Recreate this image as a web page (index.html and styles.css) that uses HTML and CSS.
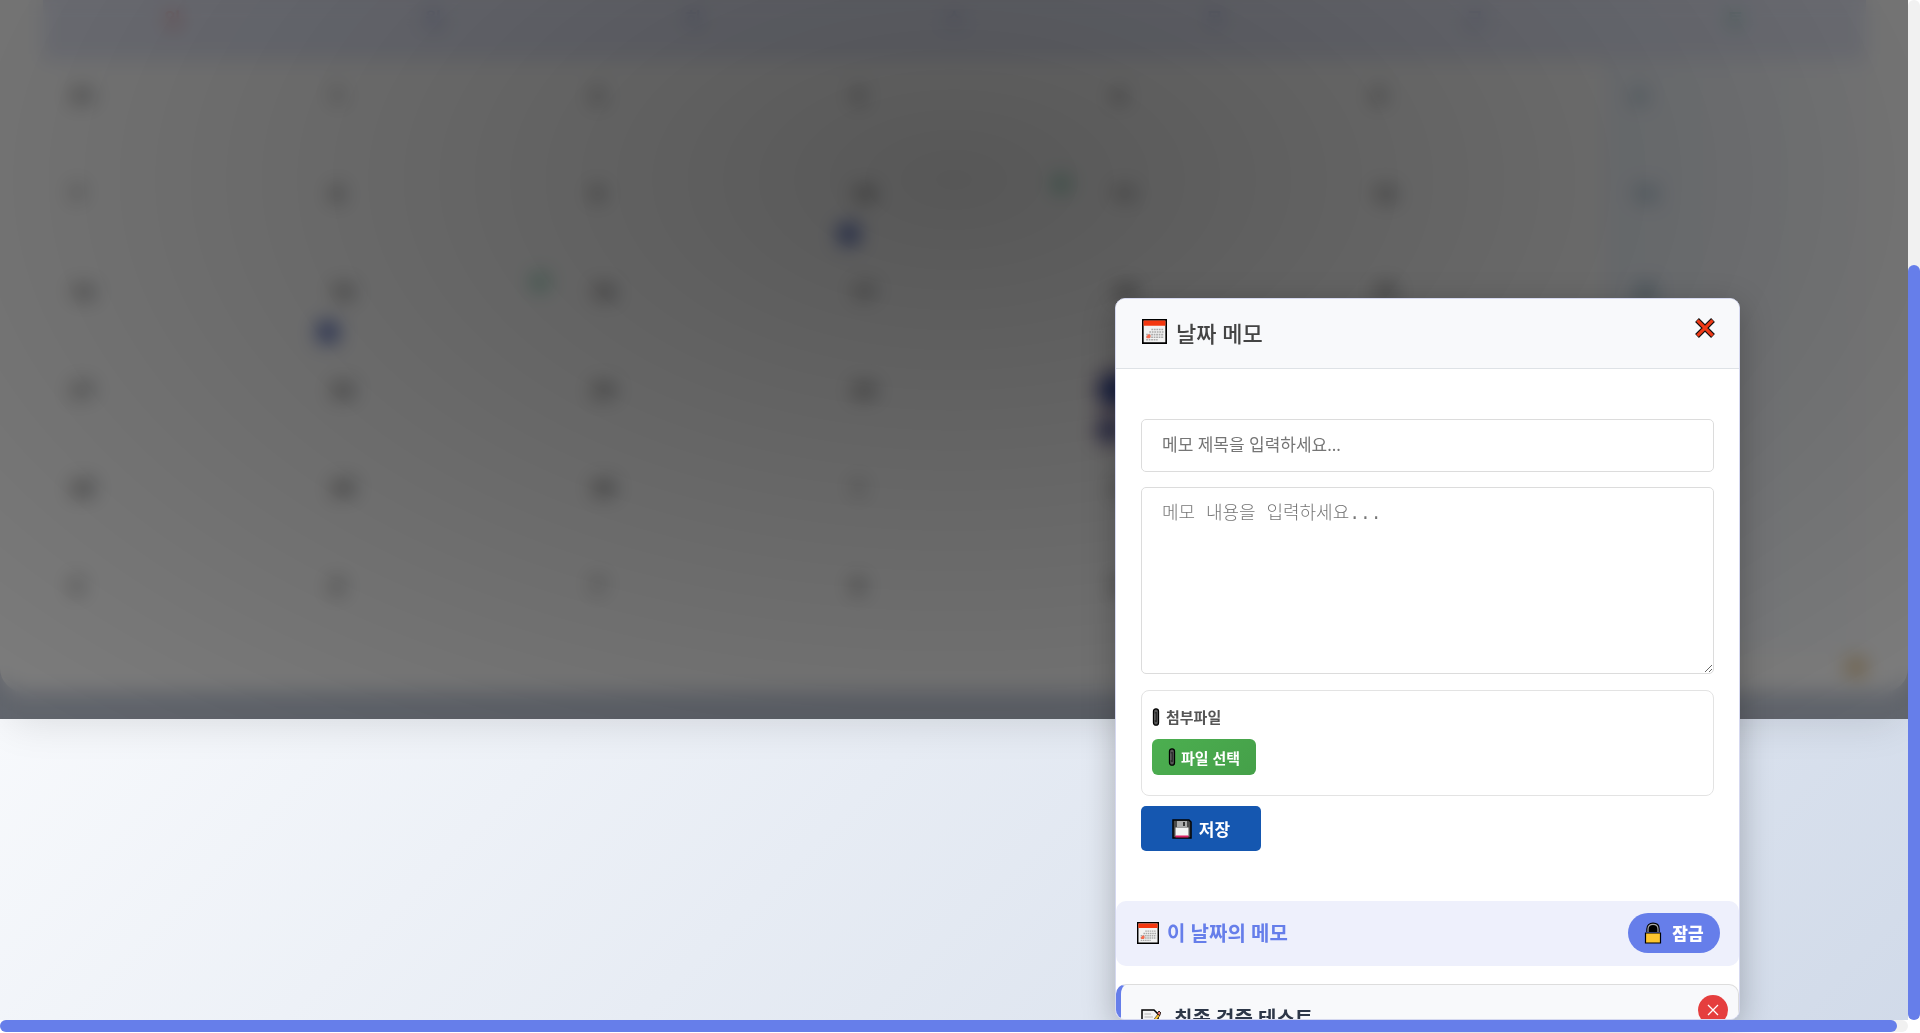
FILE: index.html
```
<!DOCTYPE html>
<html lang="ko">
<head>
<meta charset="utf-8">
<title>날짜 메모</title>
<link rel="stylesheet" href="styles.css">
</head>
<body>
<div class="viewport">
  <main class="page">
    <section class="stage">
      <div class="calendar-card">
        <table class="calendar">
          <thead><tr><th class="sun">일</th><th>월</th><th>화</th><th>수</th><th>목</th><th>금</th><th class="sat">토</th></tr></thead>
          <tbody>
            <tr><td>31</td><td>1</td><td>2</td><td>3</td><td>4</td><td>5</td><td class="sat">6</td></tr>
            <tr><td>7</td><td>8</td><td>9</td><td class="noted">10</td><td>11</td><td>12</td><td class="sat">13</td></tr>
            <tr><td>14</td><td class="noted">15</td><td>16</td><td>17</td><td>18</td><td>19</td><td class="sat">20</td></tr>
            <tr><td>21</td><td>22</td><td>23</td><td>24</td><td class="today">25</td><td>26</td><td class="sat">27</td></tr>
            <tr><td>28</td><td>29</td><td>30</td><td>1</td><td>2</td><td>3</td><td class="sat">4</td></tr>
            <tr><td>5</td><td>6</td><td>7</td><td>8</td><td>9</td><td>10</td><td class="sat">11</td></tr>
          </tbody>
        </table>
        <span class="resize-mark"></span>
      </div>
      <div class="backdrop"></div>
    </section>
  </main>
  <div class="track track-y"><div class="thumb thumb-y"></div></div>
  <div class="track track-x"><div class="thumb thumb-x"></div></div>

  <div class="modal" role="dialog" aria-labelledby="modal-title">
    <header class="modal-head">
      <h2 class="modal-title" id="modal-title">
        <svg class="icon icon-lg" viewBox="0 0 24 24"><use href="#cal"/></svg>날짜 메모
      </h2>
      <button class="close" type="button" aria-label="닫기">
        <svg class="icon" viewBox="0 0 22 22" width="22" height="22"><path d="M3 3L19 19M19 3L3 19" stroke="#111" stroke-width="5.400"/><path d="M3.400 3.400L18.600 18.600M18.600 3.400L3.400 18.600" stroke="#f03a17" stroke-width="3.200"/></svg>
      </button>
    </header>
    <form class="memo-form">
      <input class="field" type="text" aria-label="메모 제목" placeholder="메모 제목을 입력하세요...">
      <textarea class="field area" aria-label="메모 내용" placeholder="메모 내용을 입력하세요..."></textarea>
      <div class="files">
        <span class="files-label"><svg class="clip" viewBox="0 0 8 18"><use href="#clip"/></svg>첨부파일</span>
        <button class="file-btn" type="button"><svg class="clip" viewBox="0 0 8 18"><use href="#clip"/></svg>파일 선택</button>
      </div>
      <button class="save" type="button"><svg class="icon" viewBox="0 0 20 20" width="20" height="20"><path d="M1 1H17L19 3V19H1Z" fill="#4a4a4a" stroke="#000" stroke-width="1.500"/><path d="M5 2H15V8H5Z" fill="#ababab"/><path d="M11 3H13V7H11Z" fill="#333"/><path d="M3.500 8.500H16.500V17H3.500Z" fill="#f4f4f4"/><path d="M3.500 16.500H16.500V18.500H3.500Z" fill="#d91e63"/></svg>저장</button>
    </form>
    <div class="list-head">
      <h3 class="list-title"><svg class="icon icon-md" viewBox="0 0 24 24"><use href="#cal"/></svg>이 날짜의 메모</h3>
      <button class="lock" type="button"><svg viewBox="0 0 18 22" width="18" height="22"><path d="M4 10V7C4 4 6 2.300 9 2.300S14 4 14 7V10" fill="#000" stroke="#000" stroke-width="3.500"/><path d="M4 10V7C4 4 6 2.300 9 2.300S14 4 14 7V10" fill="none" stroke="#a9a9a9" stroke-width="1.200"/><path d="M1.500 11H16.500V21H1.500Z" fill="#fdc52f" stroke="#000" stroke-width="1.200"/></svg>잠금</button>
    </div>
    <article class="memo">
      <h4 class="memo-title"><svg class="icon" viewBox="0 0 20 20" width="20" height="20"><path d="M1 1H13L17 5V19H1Z" fill="#f3f3f3" stroke="#000" stroke-width="1.500"/><path d="M3.500 5H10M3.500 8H12M3.500 11H10" stroke="#b5b5b5"/><path d="M9 15.500L17 5L19 6.500L11 16.500Z" fill="#fcc331" stroke="#000" stroke-width=".5"/><path d="M16 4.500L18 2L20 4L18.500 6.500Z" fill="#f2796b" stroke="#000" stroke-width=".8"/></svg>최종 검증 테스트</h4>
      <button class="delete" type="button" aria-label="삭제"><svg viewBox="0 0 12 12" width="12" height="12"><path d="M1 1L11 11M11 1L1 11" stroke="#fff" stroke-width="1.300"/></svg></button>
    </article>
  </div>
</div>
<svg class="defs" aria-hidden="true">
  <symbol id="cal" viewBox="0 0 24 24"><path d="M.8 .8H23.200V23.200H.8Z" fill="#f2f2f2" stroke="#000" stroke-width="1.600"/><path d="M1.500 1.500H22.500V6.500H1.500Z" fill="#f4370f"/><path d="M9 10H21M7 12.500H21M4 15H21M4 17.500H21M4 20H15" stroke="#aaa" stroke-width="1.500" stroke-dasharray="1.700 .7"/><path d="M4.500 16.500L6.500 14.500L8.500 16L7.500 18.500H4.500Z" fill="#f7694c"/></symbol>
  <symbol id="clip" viewBox="0 0 8 18"><rect x="1.500" y=".8" width="5" height="16.400" rx="2.500" fill="#555" stroke="#000" stroke-width="1.300"/><path d="M4 4V14" stroke="#222" stroke-width="1.500"/><path d="M3 5.500V12" stroke="#888" stroke-width=".6"/></symbol>
</svg>
</body>
</html>
```
FILE: styles.css
```
* { box-sizing: border-box; }
body {
  margin: 0;
  color: #333;
  font-family: "Noto Sans", "Noto Sans CJK KR", sans-serif;
  font-size: 16px;
}
h2, h3, h4 { margin: 0; }
button { border: 0; padding: 0; font-family: inherit; cursor: pointer; }
.defs { display: none; }
.viewport {
  position: relative;
  display: grid;
  grid-template-columns: 1fr 12px;
  grid-template-rows: 1fr 13px;
  height: 100vh;
  overflow: hidden;
  background: #fff;
}
.page {
  overflow: hidden;
  background: linear-gradient(135deg, #f7f9fc 0%, #c3cfe2 100%) 0 719px / 100% 1118px no-repeat;
}
.stage {
  position: relative;
  height: 719px;
  box-shadow: 0 12px 40px -10px rgba(0, 0, 0, .12);
  background: #c6cedd;
}
.calendar-card {
  position: relative;
  height: 692px;
  padding: 0 42px;
  background: #fff;
  border-radius: 0 0 24px 24px;
}
.calendar { width: 100%; border-collapse: collapse; table-layout: fixed; }
.calendar th { height: 60px; padding: 0 0 24px; background: #e8ebf9; color: #a8b1de; font-size: 18px; }
.calendar th.sun { color: #e89a9a; }
.calendar th.sat { color: #7fc0b2; }
.calendar td { position: relative; height: 98px; padding: 21px 28px; vertical-align: top; border: 1px solid #f3f3f3; color: #444; font-size: 20px; font-weight: 700; line-height: 28px; }
.calendar td.sat { background: linear-gradient(90deg, #f3f8ff, #fcfdff); color: #5685a0; }
.noted::before, .noted::after, .today::before, .today::after { content: ""; position: absolute; border-radius: 50%; }
.noted::before { left: 14px; top: 64px; width: 22px; height: 22px; background: #4a61b8; }
.noted::after { right: 14px; top: 16px; width: 18px; height: 18px; background: #8fd0b6; }
.today::before, .today::after { left: 14px; background: #2b4aa5; }
.today::before { top: 18px; width: 34px; height: 34px; box-shadow: 0 0 0 5px #e3b5b5; }
.today::after { top: 64px; width: 22px; height: 22px; box-shadow: 0 0 0 5px #e3b5b5; }
.resize-mark { position: absolute; right: 42px; bottom: 16px; width: 20px; height: 18px; background: #e3bf80; border-radius: 8px; }
.backdrop {
  position: absolute;
  inset: 0;
  background: radial-gradient(ellipse farthest-corner at 50% 25%, rgba(0, 0, 0, .66), rgba(0, 0, 0, .51));
  backdrop-filter: blur(10px);
}
.track { position: relative; z-index: 1; background: #f1f1f1; border-radius: 6px; }
.track-y { display: flex; align-items: flex-end; }
.track-x { height: 12px; }
.thumb { background: #667eea; border-radius: 6px; }
.thumb-y { width: 100%; height: 74%; }
.thumb-x { width: 99.4%; height: 100%; }
.modal {
  position: absolute;
  right: 180px;
  top: 298px;
  bottom: 13px;
  width: 625px;
  overflow: hidden;
  background: #fff;
  border: 1px solid #d5d8f0;
  border-radius: 10px;
  box-shadow: 0 8px 32px rgba(0, 0, 0, .25);
}
.modal-head {
  display: flex;
  justify-content: space-between;
  height: 70px;
  padding: 0 20px 4px 26px;
  background: #f8f9fb;
  border-bottom: 1px solid #dee2e6;
}
.icon { flex: none; }
.icon-lg { width: 25px; height: 25px; }
.icon-md { width: 22px; height: 22px; }
.modal-title { display: flex; align-items: center; gap: 9px; color: #444; font-size: 22px; font-weight: 500; }
.close { display: flex; align-items: center; width: 28px; height: 58px; justify-content: center; background: none; }
.memo-form { display: flex; flex-direction: column; align-items: flex-start; padding: 50px 25px; }
.field {
  width: 100%;
  height: 53px;
  margin: 0 0 15px;
  padding: 0 20px 2px;
  border: 1px solid #dcdcdc;
  border-radius: 5px;
  background: #fff;
  font-family: inherit;
  font-size: 17px;
}
.field::placeholder { color: #757575; }
.area { height: 187px; margin-bottom: 16px; padding: 12px 20px; font-family: "Liberation Mono", "Noto Sans CJK KR", monospace; font-size: 18px; font-weight: 300; line-height: 28px; resize: vertical; }
.files {
  display: flex;
  flex-direction: column;
  align-items: flex-start;
  gap: 10px;
  width: 100%;
  height: 106px;
  margin-bottom: 10px;
  padding: 14px 10px;
  border: 1px solid #e3e3e3;
  border-radius: 8px;
}
.files-label { display: flex; align-items: center; gap: 6px; color: #555; font-size: 15px; font-weight: 700; line-height: 24px; }
.clip { width: 8px; height: 18px; }
.file-btn {
  display: flex;
  align-items: center;
  justify-content: center;
  gap: 5px;
  width: 104px;
  height: 36px;
  color: #fff;
  font-size: 15px;
  font-weight: 700;
  background: linear-gradient(135deg, #4caf50, #45a049);
  border-radius: 6px;
}
.save {
  display: flex;
  align-items: center;
  justify-content: center;
  gap: 7px;
  width: 120px;
  height: 45px;
  color: #fff;
  font-size: 17px;
  font-weight: 700;
  background: #1557b0;
  border-radius: 5px;
}
.list-head {
  display: flex;
  align-items: center;
  justify-content: space-between;
  height: 65px;
  padding: 0 19px 2px 21px;
  background: #eef0fc;
  border-radius: 10px;
}
.list-title { display: flex; align-items: center; gap: 8px; color: #667eea; font-size: 20px; font-weight: 700; }
.lock {
  display: flex;
  align-items: center;
  justify-content: center;
  gap: 10px;
  width: 92px;
  height: 40px;
  color: #fff;
  font-size: 17px;
  font-weight: 900;
  background: #667eea;
  border-radius: 20px;
}
.memo {
  display: flex;
  align-items: flex-start;
  justify-content: space-between;
  height: 120px;
  margin-top: 18px;
  padding: 10px 10px 20px 20px;
  background: #f8f9fb;
  border: 1px solid #ddd;
  border-left: 5px solid #667eea;
  border-radius: 10px;
}
.memo-title { display: flex; align-items: center; gap: 13px; padding-top: 10px; color: #2d3748; font-size: 20px; font-weight: 700; line-height: 28px; }
.delete { display: flex; align-items: center; justify-content: center; width: 30px; height: 30px; background: #e53e3e; border-radius: 50%; }
```
